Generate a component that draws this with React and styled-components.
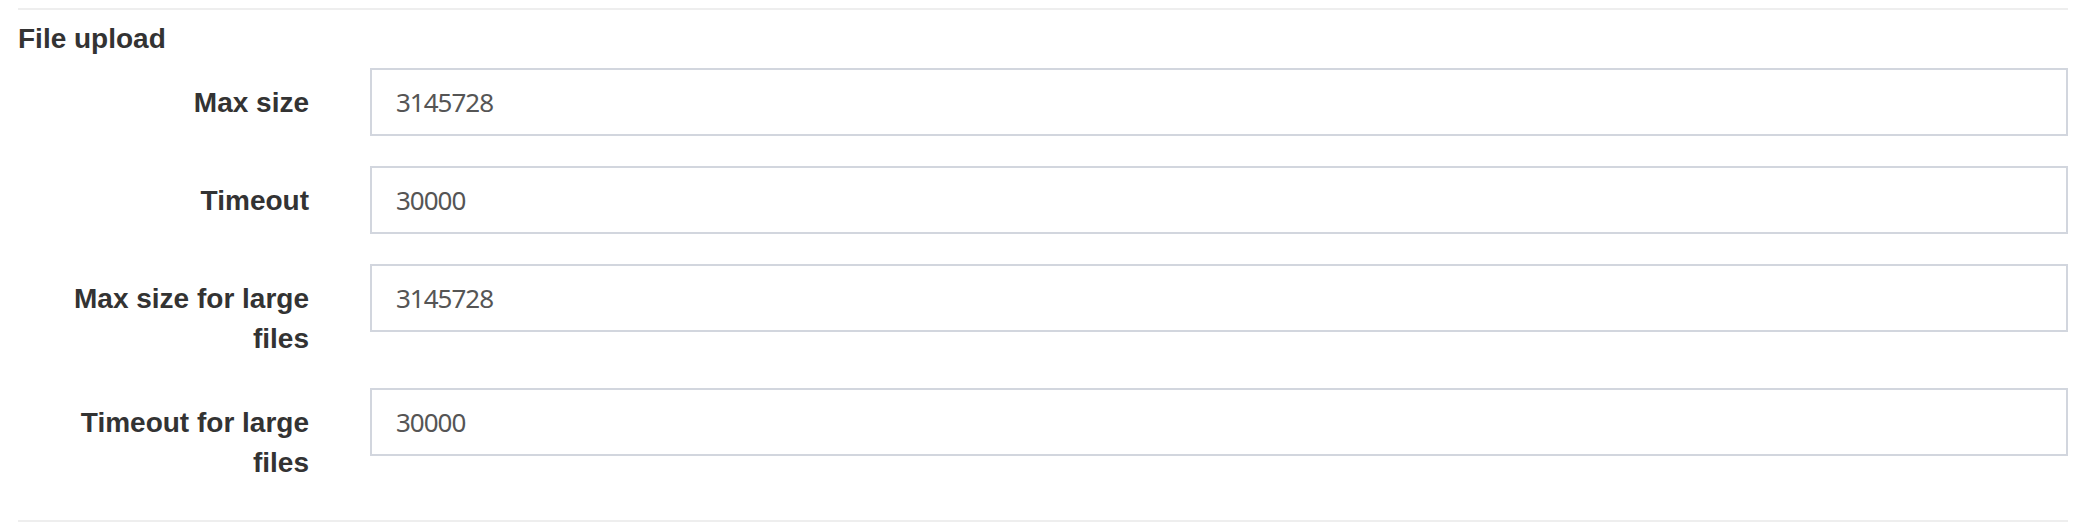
import React from "react";
import styled, { createGlobalStyle } from "styled-components";

const fields = [
    { label: "Max size", value: "3145728" },
    { label: "Timeout", value: "30000" },
    { label: "Max size for large files", value: "3145728" },
    { label: "Timeout for large files", value: "30000" },
];

function App()
{
    return (
        <>
            <GlobalStyle/>
            <Page>
                <Divider/>
                <Legend>File upload</Legend>
                <Form>
                    {fields.map((field, index) => (
                        <Row key={index}>
                            <Label>{field.label}</Label>
                            <Input type="text" readOnly value={field.value}/>
                        </Row>
                    ))}
                </Form>
                <Divider $bottom/>
            </Page>
        </>
    );
}

export default App;

const GlobalStyle = createGlobalStyle`
    body {
        margin: 0;
        background: #ffffff;
        font-family: "Liberation Sans", Arial, sans-serif;
        color: #333333;
    }
`
const Page = styled.div`
    display: flex;
    flex-flow: column nowrap;
    padding: 8px 26px 0 18px;
`
const Divider = styled.div`
    height: 0;
    border-top: 2px solid #eeeeee;
    margin-top: ${props => props.$bottom ? "8px" : "0"};
`
const Legend = styled.div`
    margin: 9px 0 9px;
    font-size: 28px;
    line-height: 40px;
    font-weight: bold;
    color: #333333;
`
const Form = styled.div`
    display: flex;
    flex-flow: column nowrap;
`
const Row = styled.div`
    display: grid;
    grid-template-columns: 291px 1fr;
    column-gap: 61px;
    align-items: start;
    margin-bottom: 30px;
`
const Label = styled.label`
    padding: 15px 0 0 11px;
    margin-bottom: -1px;
    text-align: right;
    font-size: 28px;
    line-height: 40px;
    font-weight: bold;
    color: #333333;
`
const Input = styled.input`
    box-sizing: border-box;
    width: 100%;
    height: 68px;
    margin: 0;
    padding: 0 24px;
    border: 2px solid #d2d6de;
    border-radius: 0;
    outline: none;
    background: #ffffff;
    font-family: "Noto Sans", sans-serif;
    font-size: 26px;
    letter-spacing: -1px;
    color: #555555;
`
